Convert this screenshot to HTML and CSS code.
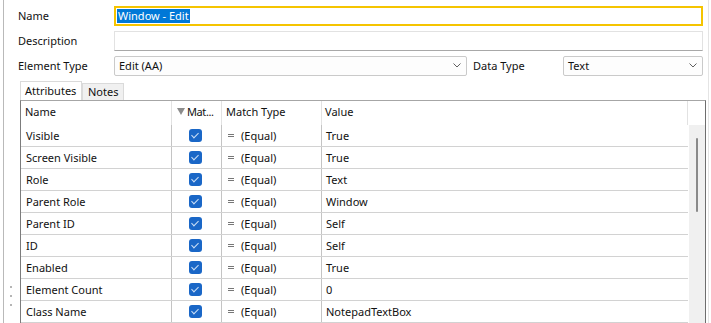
FILE: index.html
```html
<!DOCTYPE html>
<html lang="en">
<head>
  <meta charset="UTF-8" />
  <meta name="viewport" content="width=device-width, initial-scale=1.0"/>
  <title>Element Editor</title>
  <link rel="stylesheet" href="styles.css">
</head>
<body>

  <div class="panel">
    <!-- splitter grip on the left edge -->
    <div class="grip">
      <span class="dot"></span>
      <span class="dot"></span>
      <span class="dot"></span>
    </div>

    <div class="content">
      <div class="form">
        <div class="field-row">
          <label class="label">Name</label>
          <div class="input input-focus"><span class="selected">Window - Edit</span></div>
        </div>
        <div class="field-row">
          <label class="label">Description</label>
          <div class="input"></div>
        </div>
        <div class="field-row">
          <label class="label">Element Type</label>
          <div class="select select-wide">
            <span>Edit (AA)</span>
            <svg class="chevron" width="8" height="5" viewBox="0 0 8 5"><path d="M0.5 0.5 L4 4 L7.5 0.5" fill="none" stroke="#606060" stroke-width="1"/></svg>
          </div>
          <label class="label label-data">Data Type</label>
          <div class="select select-narrow">
            <span>Text</span>
            <svg class="chevron" width="8" height="5" viewBox="0 0 8 5"><path d="M0.5 0.5 L4 4 L7.5 0.5" fill="none" stroke="#606060" stroke-width="1"/></svg>
          </div>
        </div>
      </div>

      <div class="tabs">
        <div class="tab active">Attributes</div>
        <div class="tab">Notes</div>
      </div>

      <div class="grid">
        <div class="grid-main">
          <div class="row head">
            <div class="cell">Name</div>
            <div class="cell cell-match">
              <svg class="filter" width="8" height="7" viewBox="0 0 8 7"><path d="M0 0 H8 L4 7 Z" fill="#8c8c8c"/></svg>
              <span class="match-title">Mat...</span>
            </div>
            <div class="cell">Match Type</div>
            <div class="cell">Value</div>
          </div>
          <div id="rows"></div>
        </div>
        <div class="scrollbar">
          <div class="scroll-head"></div>
          <div class="track"><div class="thumb"></div></div>
        </div>
      </div>
    </div>
  </div>

  <script>
    const attributes = [
      ['Visible', 'True'],
      ['Screen Visible', 'True'],
      ['Role', 'Text'],
      ['Parent Role', 'Window'],
      ['Parent ID', 'Self'],
      ['ID', 'Self'],
      ['Enabled', 'True'],
      ['Element Count', '0'],
      ['Class Name', 'NotepadTextBox']
    ];

    const rows = document.getElementById('rows');

    attributes.forEach(([name, value]) => {
      const row = document.createElement('div');
      row.classList.add('row');
      row.innerHTML = `
        <div class="cell">${name}</div>
        <div class="cell cell-check"><span class="check"></span></div>
        <div class="cell"><span class="eq"></span>(Equal)</div>
        <div class="cell">${value}</div>
      `;
      rows.appendChild(row);
    });
  </script>

</body>
</html>
```

FILE: styles.css
```css
body {
  margin: 0;
  height: 323px;
  overflow: hidden;
  background: #ffffff;
  font-family: 'Noto Sans', sans-serif;
  font-size: 11px;
  color: #111;
}

.panel {
  display: flex;
  height: 323px;
  width: 706px;
  margin-left: 3px;
  box-sizing: border-box;
  border-left: 1px solid #b9b9b9;
  border-right: 1px solid #e4e4e4;
}

.grip {
  width: 14px;
  flex-shrink: 0;
  display: flex;
  flex-direction: column;
  align-items: flex-start;
  gap: 7px;
  padding-top: 286px;
  padding-left: 6px;
  box-sizing: border-box;
}

.dot {
  width: 2px;
  height: 2px;
  background: #b5b5b5;
}

.content {
  flex: 1;
  display: flex;
  flex-direction: column;
  min-width: 0;
}

.form {
  display: flex;
  flex-direction: column;
  gap: 5px;
  padding-top: 6px;
  margin-right: 5px;
}

.field-row {
  display: flex;
  align-items: center;
  height: 20px;
}

.label {
  width: 96px;
  flex-shrink: 0;
  padding-bottom: 2px;
}

.label-data {
  width: 90px;
  margin-left: 6px;
}

.input {
  flex: 1;
  height: 20px;
  box-sizing: border-box;
  border: 1px solid #e2e2e2;
  border-bottom-color: #a8a8a8;
  display: flex;
  align-items: center;
  padding-left: 2px;
}

.input-focus {
  border: 2px solid #f5c400;
  padding-left: 1px;
}

.selected {
  background: #0078d7;
  color: #ffffff;
  line-height: 13px;
  padding: 0 1px 1px;
}

.select {
  height: 20px;
  box-sizing: border-box;
  border: 1px solid #cacaca;
  border-radius: 2px;
  background: #fdfdfd;
  display: flex;
  align-items: center;
  justify-content: space-between;
  padding: 0 5px 1px 4px;
}

.select-wide {
  width: 353px;
}

.select-narrow {
  flex: 1;
}

.tabs {
  display: flex;
  align-items: flex-end;
  margin: 5px 0 0 2px;
  height: 19px;
}

.tab {
  height: 17px;
  box-sizing: border-box;
  padding: 0 5px 2px;
  border: 1px solid #dadada;
  border-bottom: none;
  background: #f0f0f0;
  display: flex;
  align-items: center;
}

.tab.active {
  height: 19px;
  width: 62px;
  background: #ffffff;
  padding-left: 4px;
}

.grid {
  flex: 1;
  display: flex;
  margin: 0 2px;
  border-top: 1px solid #a6a6a6;
  border-left: 1px solid #7c7c7c;
  border-right: 1px solid #6e6e6e;
  overflow: hidden;
}

.grid-main {
  flex: 1;
  min-width: 0;
}

.row {
  display: grid;
  grid-template-columns: 151px 50px 100px 1fr;
  height: 22px;
  box-sizing: border-box;
  border-bottom: 1px solid #d2d2d2;
}

.row.head {
  height: 24px;
  border-bottom: none;
}

.cell {
  display: flex;
  align-items: center;
  padding-left: 5px;
  padding-bottom: 1px;
  border-right: 1px solid #c4c4c4;
  white-space: nowrap;
  overflow: hidden;
}

.head .cell {
  border-right-color: #e2e2e2;
  padding-left: 4px;
  padding-bottom: 4px;
}

.row .cell:last-child {
  border-right: none;
  padding-left: 4px;
}

.head .cell:last-child {
  border-right: 1px solid #e2e2e2;
  padding-left: 3px;
}

.head .cell-match {
  gap: 2px;
  padding-left: 5px;
  overflow: visible;
}

.match-title {
  letter-spacing: -0.4px;
}

.filter {
  flex-shrink: 0;
}

.cell-check {
  justify-content: center;
  padding-left: 0;
  padding-right: 2px;
  padding-bottom: 0;
}

.check {
  position: relative;
  width: 13px;
  height: 13px;
  border-radius: 3px;
  background: #1a67c7;
}

.check::after {
  content: "";
  position: absolute;
  left: 4px;
  top: 2px;
  width: 3px;
  height: 6px;
  border-right: 1px solid #cde0f6;
  border-bottom: 1px solid #cde0f6;
  transform: rotate(45deg);
}

.eq {
  width: 6px;
  height: 1px;
  border-top: 1px solid #777;
  border-bottom: 1px solid #777;
  margin-right: 7px;
  margin-left: 1px;
}

.scrollbar {
  width: 17px;
  flex-shrink: 0;
  display: flex;
  flex-direction: column;
}

.scroll-head {
  height: 24px;
  flex-shrink: 0;
}

.track {
  flex: 1;
  margin-left: 1px;
  background: #f0f0f0;
  padding-top: 13px;
  padding-left: 7px;
}

.thumb {
  width: 2px;
  height: 74px;
  border-radius: 1px;
  background: #8a8a8a;
}
```
